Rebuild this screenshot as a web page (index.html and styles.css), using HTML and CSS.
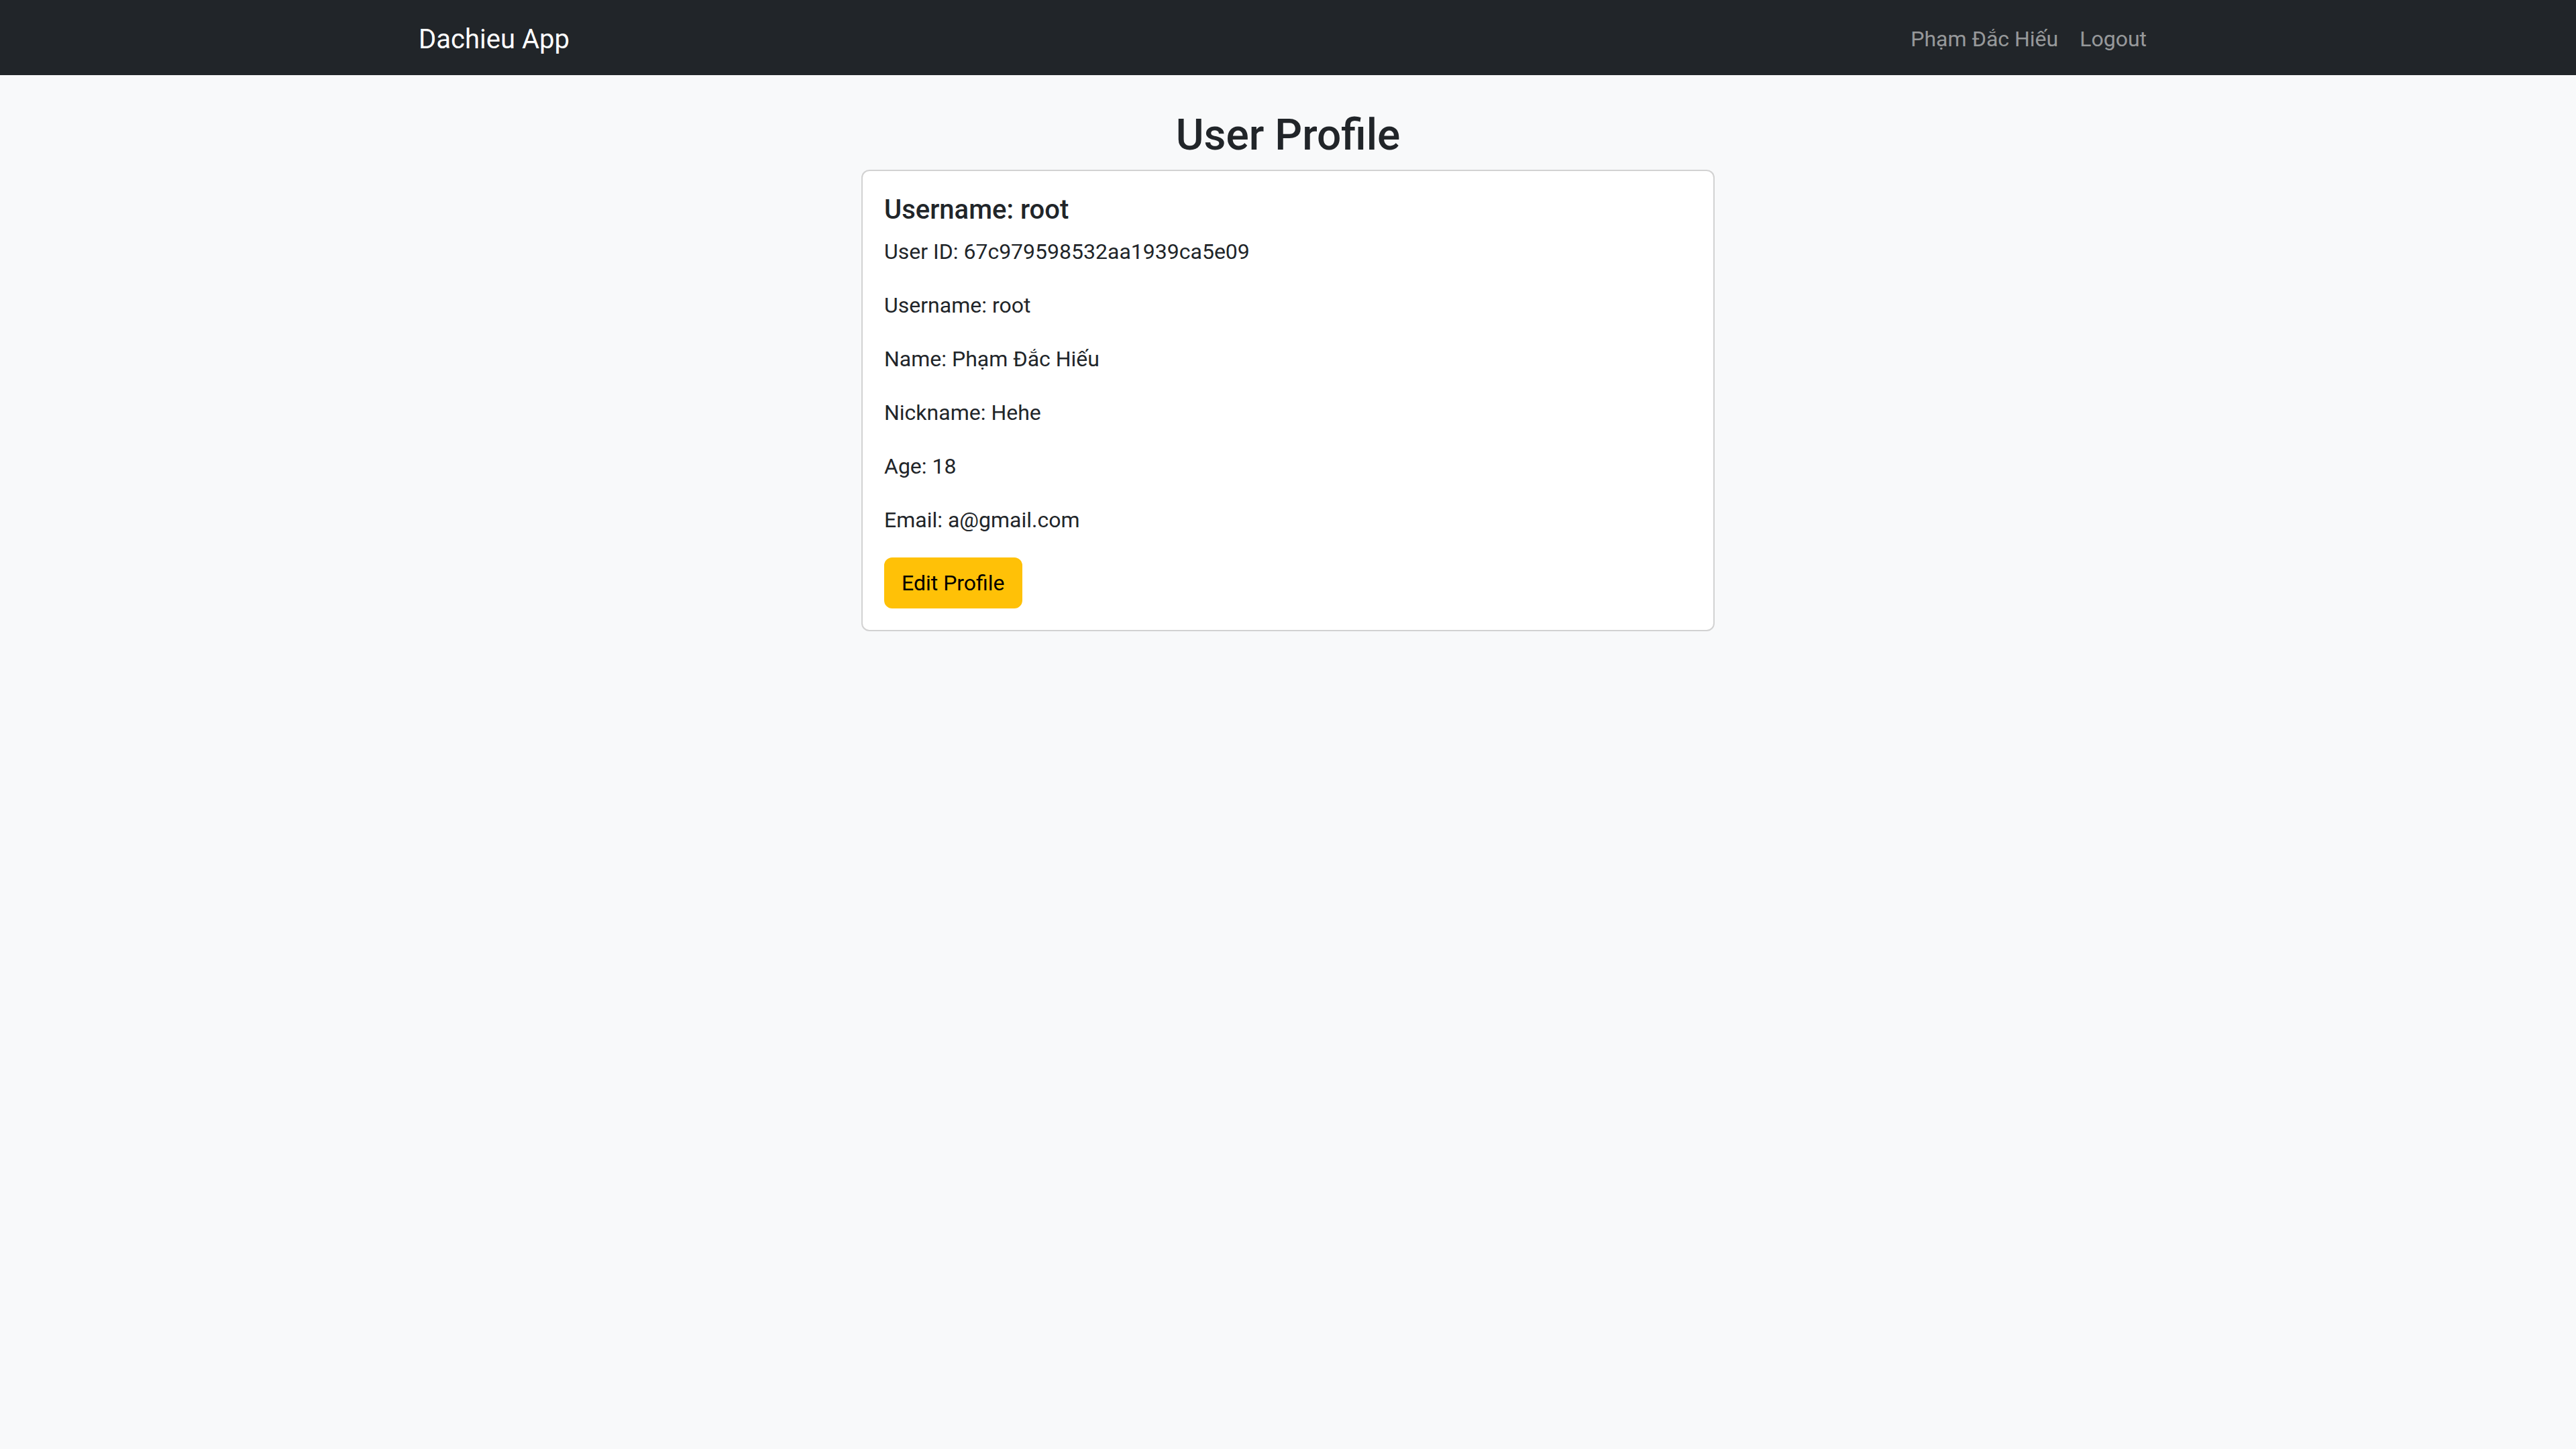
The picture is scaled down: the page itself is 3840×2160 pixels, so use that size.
FILE: index.html
```html
<!DOCTYPE html>
<html lang="vi">
<head>
<meta charset="utf-8">
<title>User Profile - Dachieu App</title>
<link rel="stylesheet" href="styles.css">
</head>
<body>
<nav class="navbar">
  <div class="container nav-inner">
    <a class="brand" href="#">Dachieu App</a>
    <div class="nav-links">
      <a class="nav-link" href="#">Phạm Đắc Hiếu</a>
      <a class="nav-link" href="#">Logout</a>
    </div>
  </div>
</nav>
<main class="container main">
  <h2 class="page-title">User Profile</h2>
  <div class="row">
    <div class="card">
      <div class="card-body">
        <h5 class="card-title">Username: root</h5>
        <p class="field">User ID: 67c979598532aa1939ca5e09</p>
        <p class="field">Username: root</p>
        <p class="field">Name: Phạm Đắc Hiếu</p>
        <p class="field">Nickname: Hehe</p>
        <p class="field">Age: 18</p>
        <p class="field">Email: a@gmail.com</p>
        <a class="btn-warning" href="#">Edit Profile</a>
      </div>
    </div>
  </div>
</main>
</body>
</html>
```
FILE: styles.css
```css
* { box-sizing: border-box; }
html, body { margin: 0; padding: 0; }
body {
  font-family: Roboto, "Noto Sans", "Liberation Sans", sans-serif;
  font-size: 32px;
  line-height: 48px;
  color: #212529;
  background: #f8f9fa;
  min-height: 2160px;
}
a { text-decoration: none; }

.container {
  max-width: 2640px;
  margin: 0 auto;
  padding: 0 24px;
}

.navbar {
  background: #212529;
  padding: 16px 0;
}
.nav-inner {
  display: flex;
  align-items: center;
  justify-content: space-between;
}
.brand {
  color: #fff;
  font-size: 40px;
  line-height: 60px;
  padding: 13px 0 7px;
}
.nav-links {
  display: flex;
  align-items: center;
}
.nav-link {
  color: rgba(255, 255, 255, 0.55);
  padding: 18px 16px 14px;
  font-size: 32px;
  line-height: 48px;
}

.main { margin-top: 48px; }
.page-title {
  text-align: center;
  font-size: 64px;
  font-weight: 500;
  line-height: 76.8px;
  padding-top: 4px;
  margin: 0 0 12px;
}
.row {
  display: flex;
  justify-content: center;
}
.card {
  width: 1272px;
  background: #fff;
  border: 2px solid rgba(0, 0, 0, 0.175);
  border-radius: 12px;
}
.card-body { padding: 32px; }
.card-title {
  font-size: 40px;
  font-weight: 500;
  line-height: 48px;
  padding-top: 2px;
  margin: 0 0 14px;
}
.field {
  margin: 0 0 32px;
}
.btn-warning {
  display: inline-block;
  background: #ffc107;
  border: 2px solid #ffc107;
  color: #000;
  padding: 12px 24px;
  font-size: 32px;
  line-height: 48px;
  border-radius: 12px;
}
```
